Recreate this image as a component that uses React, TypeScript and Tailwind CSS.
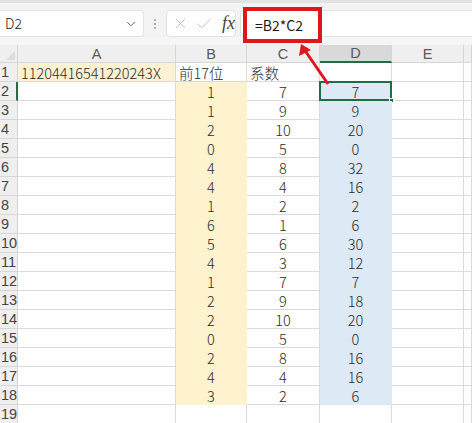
import { ChevronDown, X, Check } from "lucide-react";

const ROWS: number[][] = [
  [1, 7, 7],
  [1, 9, 9],
  [2, 10, 20],
  [0, 5, 0],
  [4, 8, 32],
  [4, 4, 16],
  [1, 2, 2],
  [6, 1, 6],
  [5, 6, 30],
  [4, 3, 12],
  [1, 7, 7],
  [2, 9, 18],
  [2, 10, 20],
  [0, 5, 0],
  [2, 8, 16],
  [4, 4, 16],
  [3, 2, 6],
];

const cell = "border-r border-b border-[#dadada] h-[19px] leading-[19px] text-[14.5px] font-light text-[#2b2b2b]";
const head = "border-r border-b border-[#d6d6d6] bg-[#efefef] text-[14.5px] text-[#5a5a5a] font-['Liberation_Sans',sans-serif]";

export default function App() {
  return (
    <div className="relative w-[472px] h-[423px] overflow-hidden bg-white font-['Noto_Sans_CJK_SC',sans-serif]">
      {/* toolbar strip */}
      <div className="h-[3px] bg-[#e2e2e2]" />
      <div className="h-[7px] bg-[#f3f3f3]" />

      {/* formula bar */}
      <div className="flex h-[27px] bg-[#f3f3f3]">
        <div className="w-[144px] flex items-center justify-between pl-[5px] pr-[5px] bg-white border-y border-r border-[#e2e2e2] rounded-r-[4px]">
          <span className="text-[14px] text-[#222] font-light">D2</span>
          <ChevronDown size={14} strokeWidth={1.6} className="text-[#555]" />
        </div>
        <div className="w-[22px] flex flex-col items-center justify-center gap-[2px]">
          <span className="w-[2px] h-[2px] bg-[#9a9a9a] rounded-full" />
          <span className="w-[2px] h-[2px] bg-[#9a9a9a] rounded-full" />
          <span className="w-[2px] h-[2px] bg-[#9a9a9a] rounded-full" />
        </div>
        <div className="w-[70px] flex items-center pl-[5px] gap-[6px] bg-white border border-[#e2e2e2] rounded-[4px]">
          <X size={17} strokeWidth={1.2} className="text-[#bdbdbd]" />
          <Check size={18} strokeWidth={1.2} className="text-[#bdbdbd]" />
          <span className="ml-[3px] font-['Liberation_Serif',serif] italic text-[18px] text-[#444]">fx</span>
        </div>
        <div className="flex-1 ml-[4px] bg-white border-y border-l border-[#e2e2e2] rounded-l-[4px]" />
      </div>
      <div className="h-[8px] bg-[#f5f5f5]" />

      {/* sheet grid */}
      <div className="grid grid-cols-[18px_158px_71px_73px_72px_72px_1fr]">
        {/* header row */}
        <div className={`${head} h-[18px] relative`}>
          <span className="absolute right-[2px] bottom-[2px] w-0 h-0 border-l-[9px] border-l-transparent border-b-[9px] border-b-[#dcdcdc]" />
        </div>
        {["A", "B", "C"].map((c) => (
          <div key={c} className={`${head} h-[18px] leading-[18px] text-center`}>{c}</div>
        ))}
        <div className={`${head} h-[18px] leading-[16px] text-center !bg-[#d9d9d9] border-b-2 !border-b-[#1e6e42]`}>D</div>
        <div className={`${head} h-[18px] leading-[18px] text-center`}>E</div>
        <div className={`${head} h-[18px]`} />

        {/* row 1 */}
        <div className={`${head} h-[19px] leading-[19px] pl-[1px] text-[#444]`}>1</div>
        <div className={`${cell} bg-[#fdf1d3] pl-[3px]`}>11204416541220243X</div>
        <div className={`${cell} pl-[3px]`}>前17位</div>
        <div className={`${cell} pl-[3px]`}>系数</div>
        <div className={cell} />
        <div className={cell} />
        <div className={cell} />

        {ROWS.map((r, i) => {
          const n = i + 2;
          return [
            <div
              key={`h${n}`}
              className={`${head} h-[19px] leading-[19px] pl-[1px] text-[#444] ${n === 2 ? "border-r-2 !border-r-[#1e6e42]" : ""}`}
            >
              {n}
            </div>,
            <div key={`a${n}`} className={cell} />,
            <div key={`b${n}`} className={`${cell} bg-[#fff2cf] !border-[#fff2cf] text-center`}>{r[0]}</div>,
            <div key={`c${n}`} className={`${cell} text-center`}>{r[1]}</div>,
            <div key={`d${n}`} className={`${cell} relative bg-[#dde9f5] !border-[#dde9f5] text-center`}>
              {r[2]}
              {n === 2 && (
                <>
                  <span className="absolute left-[-1px] top-[-1px] right-[-1px] bottom-[-1px] border-2 border-[#1e6e42]" />
                  <span className="absolute right-[-3px] bottom-[-3px] w-[5px] h-[5px] bg-[#1e6e42] border border-white" />
                </>
              )}
            </div>,
            <div key={`e${n}`} className={cell} />,
            <div key={`f${n}`} className={cell} />,
          ];
        })}

        {/* row 19 */}
        <div className={`${head} h-[19px] leading-[19px] pl-[1px] text-[#444]`}>19</div>
        <div className={cell} />
        <div className={cell} />
        <div className={cell} />
        <div className={cell} />
        <div className={cell} />
        <div className={cell} />
      </div>

      {/* annotation: red box around formula */}
      <div className="absolute left-[243px] top-[7px] w-[79px] h-[36px] border-[4px] border-[#e0161e] bg-white flex items-center pl-[8px]">
        <span className="text-[14px] text-[#1a1a1a]">=B2*C2</span>
      </div>

      {/* annotation: arrow */}
      <svg className="absolute left-0 top-0 pointer-events-none" width="472" height="423">
        <line x1="328" y1="84" x2="306" y2="52" stroke="#e0161e" strokeWidth="3" />
        <polygon points="301,44 299,56 311,50" fill="#e0161e" />
      </svg>
    </div>
  );
}
